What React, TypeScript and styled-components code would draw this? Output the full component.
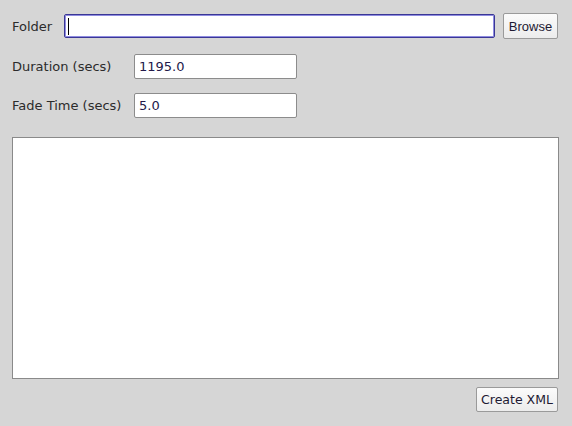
import React from "react";
import styled, { createGlobalStyle } from "styled-components";

const Global = createGlobalStyle`
  html, body { margin: 0; padding: 0; background: #d6d6d6; }
  body { font-family: "DejaVu Sans", sans-serif; }
`;

const Window = styled.div`
  width: 572px;
  height: 426px;
  box-sizing: border-box;
  background: #d6d6d6;
  padding: 13px 13px 0 12px;
  display: flex;
  flex-direction: column;
`;

const Row = styled.div<{ $mt?: number; $h?: number }>`
  display: flex;
  align-items: center;
  height: ${(p) => p.$h ?? 25}px;
  margin-top: ${(p) => p.$mt ?? 0}px;
`;

const Label = styled.div<{ $w: number }>`
  width: ${(p) => p.$w}px;
  flex: none;
  font-size: 13px;
  color: #2b2b2b;
  white-space: nowrap;
`;

const Field = styled.div<{ $w: number; $h?: number; $focused?: boolean }>`
  position: relative;
  width: ${(p) => p.$w}px;
  height: ${(p) => p.$h ?? 25}px;
  box-sizing: border-box;
  background: #fff;
  border: 1px solid ${(p) => (p.$focused ? "#3a3796" : "#8c8c8c")};
  box-shadow: ${(p) => (p.$focused ? "inset 0 0 0 1px #8f8ce0" : "none")};
  border-radius: 2px;
  display: flex;
  align-items: center;
  padding-left: 4px;
  font-size: 13px;
  color: #23194a;
`;

const Caret = styled.span`
  position: absolute;
  left: 3px;
  top: 3px;
  width: 1px;
  height: 17px;
  background: #000;
`;

const Button = styled.div<{ $w: number; $h?: number; $font?: string; $size?: number }>`
  width: ${(p) => p.$w}px;
  height: ${(p) => p.$h ?? 26}px;
  box-sizing: border-box;
  border: 1px solid #9a9a9a;
  border-radius: 2px;
  background: linear-gradient(#fbfbfb, #ececec);
  display: flex;
  align-items: center;
  justify-content: center;
  font-family: ${(p) => p.$font ?? '"DejaVu Sans", sans-serif'};
  font-size: ${(p) => p.$size ?? 12}px;
  color: #1e1a33;
`;

const Spacer = styled.div`
  width: 8px;
  flex: none;
`;

const TextArea = styled.div`
  margin-top: 19px;
  width: 547px;
  height: 242px;
  flex: none;
  box-sizing: border-box;
  background: #fff;
  border: 1px solid #8a8a8a;
`;

const Footer = styled.div`
  display: flex;
  justify-content: flex-end;
  margin-top: 8px;
  padding-right: 1px;
`;

export default function App() {
  return (
    <>
      <Global />
      <Window>
        <Row $h={26}>
          <Label $w={52}>Folder</Label>
          <Field $w={431} $h={24} $focused>
            <Caret />
          </Field>
          <Spacer />
          <Button $w={55} $font='"Liberation Sans", Arial, sans-serif' $size={13}>
            Browse
          </Button>
        </Row>
        <Row $mt={15}>
          <Label $w={122}>Duration (secs)</Label>
          <Field $w={163}>1195.0</Field>
        </Row>
        <Row $mt={14}>
          <Label $w={122}>Fade Time (secs)</Label>
          <Field $w={163}>5.0</Field>
        </Row>
        <TextArea />
        <Footer>
          <Button $w={82} $h={25} $size={12.5}>Create XML</Button>
        </Footer>
      </Window>
    </>
  );
}
